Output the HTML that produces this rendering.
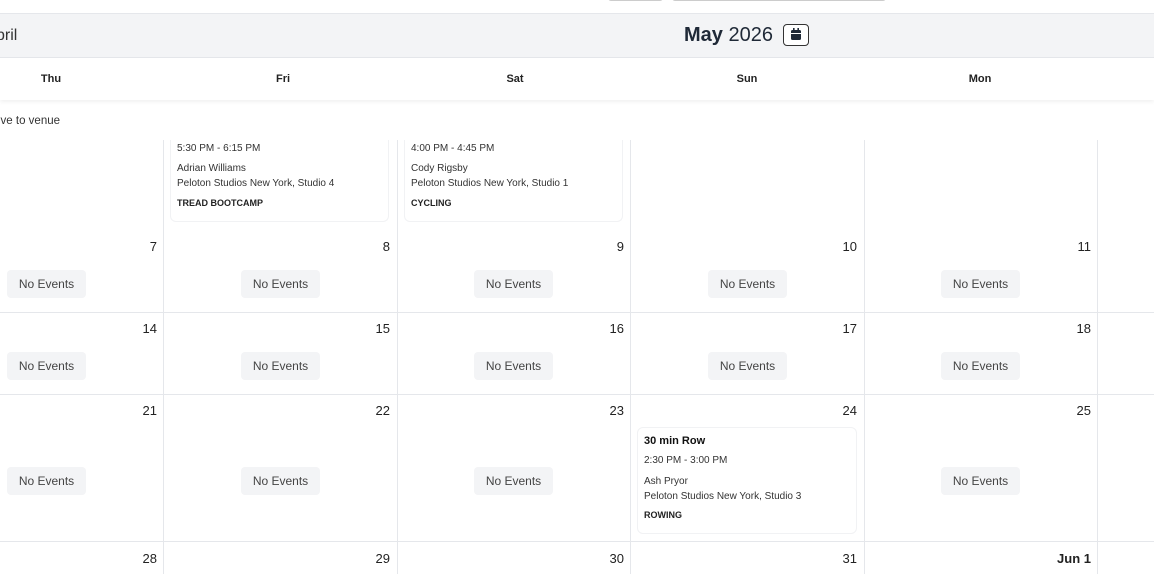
<!DOCTYPE html>
<html><head><meta charset="utf-8"><style>
*{margin:0;padding:0;box-sizing:border-box}
body{width:1154px;height:574px;overflow:hidden;background:#fff;font-family:"Liberation Sans",sans-serif;color:#1f2937;position:relative}
.a{position:absolute}
.vl{position:absolute;width:1px;background:#e5e7eb}
.hl{position:absolute;height:1px;left:0;width:1154px;background:#e5e7eb}
.d{position:absolute;font-size:13px;color:#222;text-align:right;width:60px}
.ne{position:absolute;width:79px;height:28px;background:#f3f4f6;border-radius:4px;font-size:12px;color:#444;text-align:center;line-height:28px}
.card{position:absolute;border:1px solid #f1f2f4;border-radius:6px;background:#fff;font-size:10px;color:#333}
.card div{position:absolute;left:6px;white-space:nowrap}
.b{font-weight:bold;font-size:9px;color:#222}
.dh{position:absolute;top:73px;font-size:11px;font-weight:bold;color:#222;width:100px;text-align:center}
</style></head><body>
<div class="a" style="left:608px;top:-18px;width:55px;height:19px;border:1px solid #ccc;border-radius:3px"></div>
<div class="a" style="left:672px;top:-18px;width:214px;height:19px;border:1px solid #ccc;border-radius:3px"></div>
<div class="a" style="left:0;top:13px;width:1154px;height:45px;background:#f3f4f6;border-top:1px solid #e5e7eb;border-bottom:1px solid #e5e7eb"></div>
<div class="a" style="left:-4px;top:27px;font-size:16px;color:#333">pril</div>
<div class="a" style="left:684px;top:24px;font-size:20px;color:#1f2937"><b>May</b> 2026</div>
<div class="a" style="left:783px;top:24px;width:26px;height:22px;border:1px solid #333;border-radius:4px;background:#fff">
<svg width="24" height="20" viewBox="0 0 24 20"><rect x="7" y="5" width="10" height="10" rx="1.5" fill="#1f2937"/><rect x="9" y="3" width="1.6" height="3" fill="#1f2937"/><rect x="13.4" y="3" width="1.6" height="3" fill="#1f2937"/><rect x="7" y="8" width="10" height="1" fill="#fff"/></svg></div>
<div class="a" style="left:0;top:58px;width:1154px;height:42px;background:#fff;box-shadow:0 2px 4px rgba(0,0,0,.06)"></div>
<div class="dh" style="left:1px">Thu</div>
<div class="dh" style="left:233px">Fri</div>
<div class="dh" style="left:465px">Sat</div>
<div class="dh" style="left:697px">Sun</div>
<div class="dh" style="left:930px">Mon</div>
<div class="a" style="left:-2px;top:115px;font-size:11.5px;color:#333">ive to venue</div>

<div class="vl" style="left:163px;top:140px;height:434px"></div>
<div class="vl" style="left:397px;top:140px;height:434px"></div>
<div class="vl" style="left:630px;top:140px;height:434px"></div>
<div class="vl" style="left:864px;top:140px;height:434px"></div>
<div class="vl" style="left:1097px;top:140px;height:434px"></div>
<div class="hl" style="top:312px"></div>
<div class="hl" style="top:394px"></div>
<div class="hl" style="top:541px"></div>

<div class="card" style="left:170px;top:128px;width:219px;height:94px;border-top:none">
<div style="top:15px">5:30 PM - 6:15 PM</div><div style="top:35px">Adrian Williams</div><div style="top:50px">Peloton Studios New York, Studio 4</div><div class="b" style="top:70px">TREAD BOOTCAMP</div></div>
<div class="card" style="left:404px;top:128px;width:219px;height:94px;border-top:none">
<div style="top:15px">4:00 PM - 4:45 PM</div><div style="top:35px">Cody Rigsby</div><div style="top:50px">Peloton Studios New York, Studio 1</div><div class="b" style="top:70px">CYCLING</div></div>
<div class="a" style="left:0;top:128px;width:1154px;height:12px;background:#fff"></div>

<div class="d" style="left:97px;top:239px">7</div><div class="d" style="left:330px;top:239px">8</div><div class="d" style="left:564px;top:239px">9</div><div class="d" style="left:797px;top:239px">10</div><div class="d" style="left:1031px;top:239px">11</div>
<div class="d" style="left:97px;top:321px">14</div><div class="d" style="left:330px;top:321px">15</div><div class="d" style="left:564px;top:321px">16</div><div class="d" style="left:797px;top:321px">17</div><div class="d" style="left:1031px;top:321px">18</div>
<div class="d" style="left:97px;top:403px">21</div><div class="d" style="left:330px;top:403px">22</div><div class="d" style="left:564px;top:403px">23</div><div class="d" style="left:797px;top:403px">24</div><div class="d" style="left:1031px;top:403px">25</div>
<div class="d" style="left:97px;top:551px">28</div><div class="d" style="left:330px;top:551px">29</div><div class="d" style="left:564px;top:551px">30</div><div class="d" style="left:797px;top:551px">31</div><div class="d" style="left:1031px;top:551px;font-weight:bold">Jun 1</div>

<div class="ne" style="left:7px;top:270px">No Events</div><div class="ne" style="left:241px;top:270px">No Events</div><div class="ne" style="left:474px;top:270px">No Events</div><div class="ne" style="left:708px;top:270px">No Events</div><div class="ne" style="left:941px;top:270px">No Events</div>
<div class="ne" style="left:7px;top:352px">No Events</div><div class="ne" style="left:241px;top:352px">No Events</div><div class="ne" style="left:474px;top:352px">No Events</div><div class="ne" style="left:708px;top:352px">No Events</div><div class="ne" style="left:941px;top:352px">No Events</div>
<div class="ne" style="left:7px;top:467px">No Events</div><div class="ne" style="left:241px;top:467px">No Events</div><div class="ne" style="left:474px;top:467px">No Events</div><div class="ne" style="left:941px;top:467px">No Events</div>

<div class="card" style="left:637px;top:427px;width:220px;height:107px">
<div style="top:7px;font-size:11px;font-weight:bold;color:#111">30 min Row</div><div style="top:27px">2:30 PM - 3:00 PM</div><div style="top:48px">Ash Pryor</div><div style="top:63px">Peloton Studios New York, Studio 3</div><div class="b" style="top:82px">ROWING</div></div>
</body></html>
